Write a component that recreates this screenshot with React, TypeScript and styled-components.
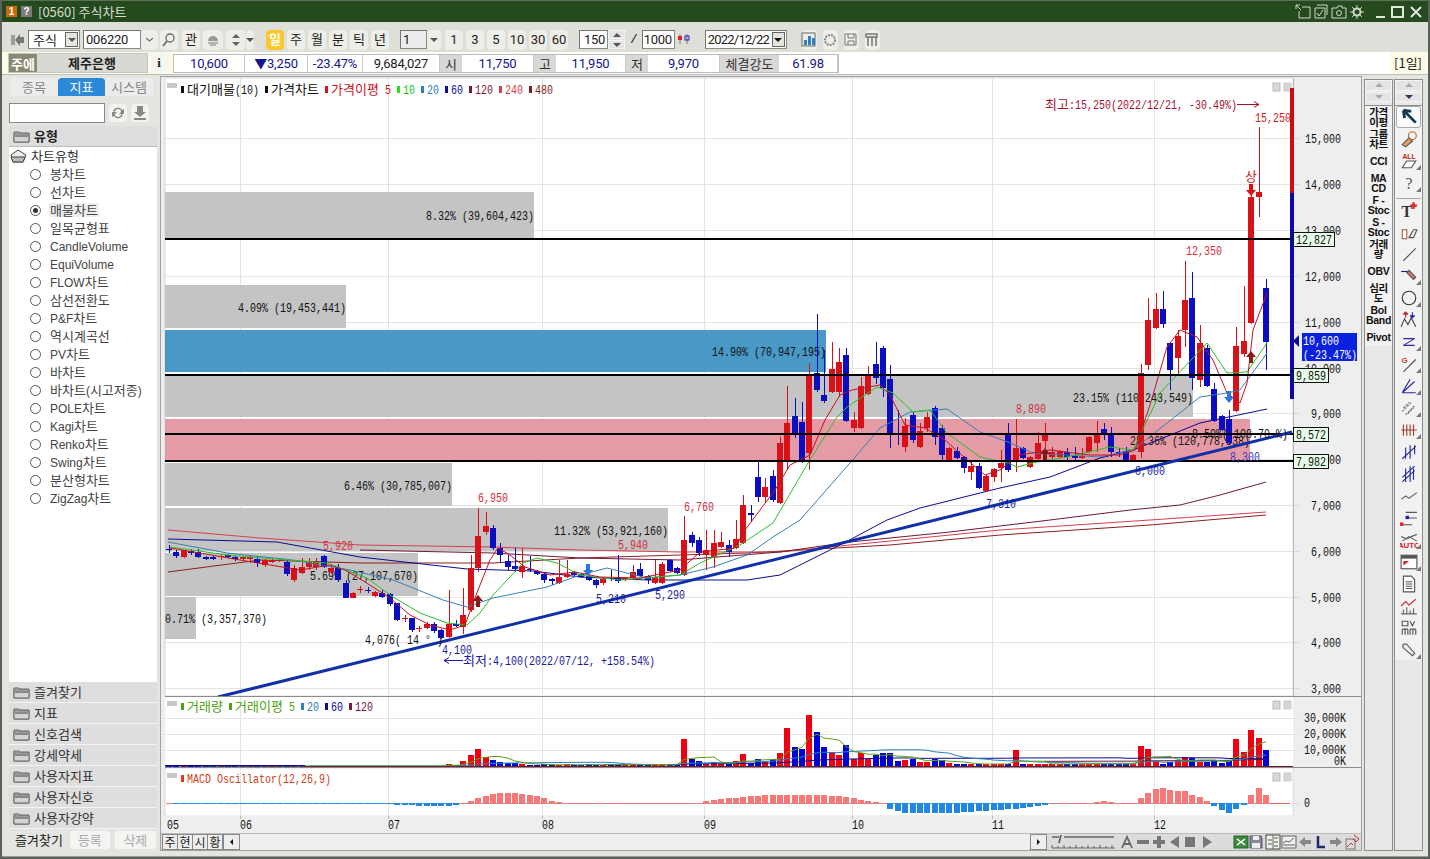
import React from 'react';
import styled, { createGlobalStyle } from 'styled-components';

const Global = createGlobalStyle`
  html, body { margin: 0; padding: 0; background: #e2e2dc; }
  #root { width: 1430px; height: 859px; overflow: hidden; }
  * { box-sizing: border-box; }
`;
const NUM = `Roboto,"Noto Sans CJK KR",sans-serif`;
const HG = `"Noto Sans CJK KR",sans-serif`;

const Win = styled.div`
  width: 1430px; height: 859px; display: flex; flex-direction: column;
  border: 2px solid #5b615a; border-top: none; background: #e4e4e0;
  font: 13px/14px ${HG}; color: #222; overflow: hidden;
`;
const TitleBar = styled.div`
  height: 22px; flex: none; background: #254a1e; border-top: 1px solid #5d6f58; display: flex; align-items: center; padding: 0 4px 0 4px;
`;
const Badge = styled.span<{ $c: string; $ml?: number }>`
  width: 11px; height: 11px; background: ${p => p.$c}; color: #fff; font: bold 10px/11px "Liberation Sans",sans-serif; text-align: center; margin-left: ${p => p.$ml ?? 0}px;
`;
const TitleText = styled.span`
  margin-left: 6px; color: #d6dfcf; font: 13px/16px ${HG};
`;
const Grow = styled.div`flex: 1;`;
const Ico = styled.svg<{ $ml?: number }>`
  display: block; flex: none; margin-left: ${p => p.$ml ?? 0}px;
`;
const Toolbar = styled.div`
  height: 30px; flex: none; background: #dfdfd9; display: flex; align-items: center; padding: 5px 0 0 8px;
`;
const Chip = styled.button<{ $w: number; $ml?: number; $on?: boolean }>`
  width: ${p => p.$w}px; height: 20px; margin-left: ${p => p.$ml ?? 0}px; padding: 0; border: none; border-radius: 4px;
  background: ${p => (p.$on ? '#fbc92c' : '#eeeee8')}; color: ${p => (p.$on ? '#fff' : '#222')};
  font: ${p => (p.$on ? 'bold ' : '')}13px/20px ${NUM}; display: flex; align-items: center; justify-content: center; flex: none;
`;
const Field = styled.div<{ $w: number; $ml?: number; $right?: boolean; $dis?: boolean }>`
  width: ${p => p.$w}px; height: 19px; margin-left: ${p => p.$ml ?? 0}px; flex: none;
  background: ${p => (p.$dis ? '#ececec' : '#fff')}; border: 1px solid #8d8d88; border-top-color: #777; border-left-color: #777;
  display: flex; align-items: center; padding: 0 2px; font: 13px/17px ${NUM}; letter-spacing: -0.3px;
  justify-content: ${p => (p.$right ? 'flex-end' : 'flex-start')};
`;
const KrField = styled(Field)`
  font: 13px/17px ${HG}; letter-spacing: 0; padding-left: 4px;
`;
const DateField = styled(Field)`letter-spacing: -0.8px;`;
const DropBox = styled.span`
  margin-left: auto; width: 13px; height: 15px; border: 1px solid #666; background: #e6e6e0; display: flex; align-items: center; justify-content: center; margin-right: -1px; flex: none;
`;
const Tri = styled.i<{ $c?: string; $up?: boolean }>`
  display: block; width: 0; height: 0; border-left: 4px solid transparent; border-right: 4px solid transparent;
  ${p => (p.$up ? `border-bottom: 4px solid ${p.$c ?? '#555'};` : `border-top: 4px solid ${p.$c ?? '#555'};`)}
`;
const Slash = styled.span`margin: 0 4px 0 5px; font: 13px/16px "Liberation Mono",monospace;`;
const InfoRow = styled.div`
  height: 23px; flex: none; display: flex; align-items: stretch; background: linear-gradient(90deg, #fdfbe5 0 171px, #fff 171px 1388px, #fdfbe5 1388px);
  padding: 1px 0 1px 6px; border-bottom: 1px solid #bdbdb8;
`;
const NameBox = styled.div`
  width: 140px; background: #d9d9d3; border: 1px solid #c6c6c0; display: flex; align-items: center; position: relative; font: bold 13px/14px ${HG};
`;
const NameTag = styled.span`
  width: 28px; height: 100%; background: #8a8a72; color: #fff; text-align: center; font: bold 13px/20px ${HG};
`;
const NameText = styled.span`flex: 1; text-align: center;`;
const InfoBtn = styled.span`
  width: 18px; margin-left: 2px; background: #f6f6f0; border-radius: 4px; text-align: center; font: bold 13px/20px "Liberation Serif",serif;
`;
const Cells = styled.div`
  display: flex; margin-left: 5px; margin-top: 1px; height: 19px; border: 1px solid #bbb; background: #fff;
`;
const Cell = styled.div<{ $w: number; $c?: string }>`
  width: ${p => p.$w}px; color: ${p => p.$c ?? '#14148c'}; text-align: center; border-right: 1px solid #c8c8c8; font: 13px/18px ${NUM}; letter-spacing: -0.2px;
`;
const HeadCell = styled.div<{ $w: number }>`
  width: ${p => p.$w}px; background: #d8d8d6; text-align: center; color: #333; font: 13px/18px ${HG};
`;
const Period = styled.span`
  margin-left: auto; margin-right: 6px; font: 13px/20px ${HG};
`;
const Body = styled.div`
  flex: 1; display: flex; padding: 1px 0 5px 6px; min-height: 0; border-bottom: 1px solid #9a9a9a;
`;
const Side = styled.div`
  width: 150px; flex: none; margin-top: 2px; margin-right: 2px; display: flex; flex-direction: column; padding-left: 1px;
`;
const Tabs = styled.div`display: flex; height: 18px; padding-left: 1px; flex: none;`;
const Tab = styled.div<{ $on?: boolean; $w: number }>`
  width: ${p => p.$w}px; text-align: center; font: 13px/18px ${HG}; background: ${p => (p.$on ? '#2b8ad8' : '#ececec')}; color: ${p => (p.$on ? '#fff' : '#888')};
  border-radius: 4px 4px 0 0;
`;
const SearchRow = styled.div`display: flex; align-items: center; margin-top: 7px; height: 20px; flex: none;`;
const SearchInput = styled.div`width: 96px; height: 20px; background: #fff; border: 1px solid #888;`;
const SmallBtn = styled.div<{ $ml: number }>`
  width: 18px; height: 18px; margin-left: ${p => p.$ml}px; background: #f3f3f0; border-radius: 4px; display: flex; align-items: center; justify-content: center;
`;
const SideHead = styled.div`
  margin-top: 3px; height: 21px; flex: none; background: #dedede; display: flex; align-items: center; padding-left: 4px; font: bold 13px/14px ${HG}; width: 148px; border-bottom: 1px solid #bbb;
`;
const Tree = styled.div`
  height: 535px; flex: none; background: #fff; width: 148px; display: flex; flex-direction: column;
`;
const TreeRoot = styled.div`
  height: 18px; flex: none; display: flex; align-items: center; padding-left: 1px; font: 13px/14px ${HG}; color: #333;
`;
const TreeItem = styled.div`
  height: 18px; flex: none; display: flex; align-items: center; padding-left: 21px; font: 13px/14px ${HG}; color: #444;
`;
const Lat = styled.span`font: 12px/14px "Liberation Sans",sans-serif;`;
const Radio = styled.i<{ $on?: boolean }>`
  width: 11px; height: 11px; flex: none; border-radius: 50%; border: 1px solid #555; background: #fff; margin-right: 8px; display: flex; align-items: center; justify-content: center;
  &::after { content: ''; width: 5px; height: 5px; border-radius: 50%; background: ${p => (p.$on ? '#333' : 'transparent')}; }
`;
const ItemLabel = styled.span<{ $on?: boolean }>`
  padding: 0 1px; background: ${p => (p.$on ? '#eee' : 'transparent')};
`;
const Section = styled.div`
  height: 21px; flex: none; width: 148px; background: #dedede; border-bottom: 1px solid #f4f4f4; display: flex; align-items: center; padding-left: 4px; font: 13px/14px ${HG}; color: #333;
`;
const SideFoot = styled.div`display: flex; align-items: center; height: 21px; width: 148px; flex: none;`;
const FootLabel = styled.span`margin-left: 6px; font: 13px/14px ${HG}; white-space: nowrap;`;
const FootBtn = styled.span<{ $ml: number; $w: number }>`
  margin-left: ${p => p.$ml}px; width: ${p => p.$w}px; height: 18px; flex: none; background: #f4f4f2; border-radius: 3px; text-align: center; color: #aaa; font: 13px/18px ${HG};
`;
const Frame = styled.div`
  width: 1202px; flex: none; border: 1px solid #a2a2a2; background: #eee; display: flex; flex-direction: column; position: relative;
`;
const Plot = styled.svg`display: block; flex: none;`;
const BottomBar = styled.div`
  height: 17px; flex: none; display: flex; align-items: center; background: #dcdcdc; padding-left: 1px; border-top: 1px solid #bbb;
`;
const BarTab = styled.span`
  width: 16px; height: 16px; background: #eee; border: 1px solid #888; text-align: center; font: 12px/14px ${HG}; margin-right: -1px;
`;
const ScrollBtn = styled.span<{ $ml?: number }>`
  width: 17px; height: 16px; margin-left: ${p => p.$ml ?? 0}px; background: #eee; border: 1px solid #888; display: flex; align-items: center; justify-content: center; flex: none;
`;
const Track = styled.div`
  flex: none; width: 790px; height: 16px; background: repeating-conic-gradient(#e8e8e8 0 25%, #f4f4f4 0 50%) 0 0 / 2px 2px;
`;
const SmallTriL = styled.i`
  border-top: 3px solid transparent; border-bottom: 3px solid transparent; border-right: 3px solid #111;
`;
const SmallTriR = styled.i`
  border-top: 3px solid transparent; border-bottom: 3px solid transparent; border-left: 3px solid #111;
`;
const Col = styled.div<{ $w: number; $ml: number }>`
  width: ${p => p.$w}px; margin-left: ${p => p.$ml}px; margin-top: 3px; flex: none; border: 1px solid #8c8c8c; background: #e8e8e8; display: flex; flex-direction: column;
`;
const SpinWrap = styled.div`height: 22px; display: flex; flex-direction: column; gap: 1px; flex: none;`;
const FieldSpin = styled(SpinWrap)`width: 17px; height: 19px;`;
const SpinCell = styled.div`
  flex: 1; background: #e2e4e6; display: flex; align-items: center; justify-content: center; border: 1px solid #f4f4f4;
`;
const ColBody = styled.div<{ $h: number }>`
  margin-top: 3px; border-top: 1px solid #8c8c8c; background: #f2f2f2; height: ${p => p.$h}px; display: flex; flex-direction: column; flex: none;
`;
const StudyItem = styled.div`
  height: 22px; flex: none; display: flex; align-items: center; justify-content: center; text-align: center; font: bold 10.5px/10px "Liberation Sans","Noto Sans CJK KR",sans-serif; color: #111; letter-spacing: -0.3px; white-space: nowrap;
`;
const Tool = styled.div<{ $on?: boolean; $corner?: boolean }>`
  height: 22px; width: 25px; margin: 0 auto; flex: none; display: flex; align-items: center; justify-content: center; position: relative;
  ${p => (p.$on ? 'background:#fafafa; border:1px solid #aaa; border-radius:3px;' : '')}
  ${p => (p.$corner ? `&::after{content:'';position:absolute;right:0;bottom:2px;border-left:5px solid transparent;border-bottom:5px solid #777;}` : '')}
`;
const Sep = styled.div`height: 1px; background: #aaa; margin: 4px 1px 0; flex: none;`;
const AsciiT = styled.text`font: 13.5px "Liberation Mono",monospace; white-space: pre;`;
const HangulT = styled.text`font: 13px "Noto Sans CJK KR",sans-serif; white-space: pre;`;

/* ---------- chart data ---------- */
type C = [number, number, number, number, 'r' | 'b'];
const candles: C[] = [
[549,550,545,553,'b'],[552,556,550,558,'b'],[550,557,550,558,'r'],[551,553,549,555,'b'],[552,557,549,558,'b'],[557,559,556,560,'b'],[557,559,556,560,'b'],[556,557,554,560,'r'],[555,557,554,558,'b'],[557,559,556,561,'b'],
[557,559,556,560,'r'],[557,559,555,563,'r'],[559,563,556,567,'b'],[560,565,559,567,'r'],[560,562,559,563,'r'],[560,561,559,562,'r'],[562,574,560,576,'b'],[568,580,565,582,'r'],[567,573,558,574,'r'],[561,567,558,570,'r'],
[561,567,558,570,'r'],[556,567,555,568,'b'],[568,572,565,574,'r'],[568,580,564,582,'b'],[583,598,580,598,'b'],[593,598,592,598,'r'],[589,590,586,593,'r'],[590,591,587,593,'b'],[592,596,591,597,'r'],[593,597,590,598,'b'],
[594,604,593,606,'b'],[603,620,603,621,'b'],[618,619,615,622,'r'],[618,630,618,632,'b'],[628,629,626,632,'r'],[624,628,622,629,'r'],[624,631,622,633,'b'],[630,638,629,639,'b'],[624,637,590,638,'r'],[624,626,620,627,'b'],
[615,627,588,634,'r'],[568,610,555,612,'r'],[536,568,508,572,'r'],[526,532,512,535,'r'],[528,548,525,550,'b'],[548,555,543,563,'b'],[561,567,555,570,'b'],[566,569,548,572,'b'],[566,572,548,578,'r'],[569,570,556,572,'b'],
[571,574,570,575,'b'],[574,580,573,583,'b'],[579,581,578,585,'b'],[577,583,560,584,'r'],[574,577,560,578,'r'],[572,575,571,576,'b'],[574,577,573,578,'b'],[576,580,575,581,'b'],[580,585,579,588,'b'],[579,583,578,585,'r'],
[578,579,570,581,'b'],[578,581,555,583,'b'],[578,580,577,581,'r'],[572,578,565,579,'r'],[569,576,563,577,'b'],[576,580,575,584,'b'],[577,583,560,584,'r'],[564,583,562,584,'r'],[560,571,559,572,'b'],[568,573,567,574,'b'],
[540,575,516,576,'r'],[535,543,532,547,'b'],[540,553,537,556,'b'],[550,555,530,570,'r'],[543,557,530,568,'r'],[542,547,532,548,'r'],[545,552,540,557,'b'],[539,548,520,549,'r'],[505,543,495,544,'r'],[513,515,505,522,'b'],
[477,497,462,502,'b'],[487,497,478,503,'r'],[476,500,470,502,'b'],[443,503,437,504,'r'],[423,462,386,470,'r'],[416,435,398,438,'b'],[422,462,402,463,'b'],[375,453,363,470,'r'],[373,390,314,392,'b'],[395,401,350,403,'b'],
[369,392,342,393,'r'],[362,392,348,397,'r'],[355,421,348,422,'b'],[420,428,412,432,'r'],[386,428,377,429,'r'],[375,394,366,395,'r'],[364,378,342,384,'b'],[348,388,346,397,'b'],[379,435,365,448,'b'],[433,435,410,445,'b'],
[426,447,418,452,'r'],[415,440,412,443,'b'],[431,447,423,448,'r'],[417,428,412,432,'r'],[408,437,406,445,'b'],[428,455,425,462,'b'],[448,460,447,461,'r'],[451,458,447,459,'b'],[457,468,456,473,'b'],[466,472,460,480,'r'],
[466,488,463,489,'b'],[476,491,475,492,'r'],[469,477,468,482,'r'],[463,468,450,482,'r'],[433,470,423,472,'b'],[448,461,419,472,'r'],[448,458,447,459,'b'],[457,467,456,468,'r'],[443,459,432,461,'r'],[435,441,423,458,'r'],
[452,457,447,459,'r'],[451,457,450,458,'r'],[452,457,448,462,'b'],[456,458,447,460,'b'],[456,458,448,459,'r'],[437,452,436,453,'r'],[435,443,421,452,'r'],[429,435,423,440,'b'],[433,452,427,457,'b'],[452,453,448,457,'b'],
[451,461,447,462,'b'],[455,461,454,462,'r'],[373,452,364,458,'r'],[320,365,298,370,'r'],[309,328,293,329,'r'],[309,324,291,328,'b'],[343,370,342,390,'b'],[336,358,330,375,'r'],[300,330,261,347,'r'],[298,378,272,390,'b'],
[343,380,325,387,'r'],[348,386,345,387,'b'],[389,421,383,422,'b'],[416,430,415,431,'b'],[419,443,410,444,'b'],[346,411,327,412,'r'],[341,354,286,357,'r'],[197,323,190,324,'r'],[192,197,127,217,'r'],[288,342,279,370,'b'],
];
const cx = (i: number) => Math.round(169 + 7.362 * i);
type Pt = [number, number];
const ma5: Pt[] = [[170,548],[240,560],[300,570],[330,565],[345,570],[365,582],[390,598],[410,615],[430,625],[450,630],[465,625],[478,590],[490,560],[498,548],[510,555],[525,567],[550,575],[575,572],[600,577],[640,578],[680,570],[700,552],[735,548],[745,530],[760,510],[775,490],[790,465],[810,455],[825,420],[840,395],[852,390],[880,385],[890,395],[905,425],[925,428],[945,440],[965,458],[985,475],[1000,470],[1020,455],[1050,450],[1090,455],[1120,455],[1135,450],[1150,405],[1167,347],[1180,330],[1197,337],[1213,360],[1227,393],[1240,403],[1247,383],[1253,330],[1267,293]];
const ma10: Pt[] = [[170,547],[227,555],[287,560],[327,563],[367,578],[393,597],[420,613],[447,623],[467,625],[480,613],[493,595],[523,563],[537,558],[557,563],[580,575],[620,580],[680,575],[700,563],[740,545],[773,523],[808,463],[837,417],[847,407],[877,387],[893,393],[913,412],[930,410],[947,433],[980,457],[1008,463],[1017,467],[1037,462],[1067,457],[1110,447],[1133,450],[1160,393],[1207,343],[1227,373],[1247,372],[1267,343]];
const ma20: Pt[] = [[168,542],[227,553],[293,560],[350,570],[393,580],[443,600],[467,607],[493,598],[547,587],[580,575],[607,568],[647,578],[680,575],[713,567],[747,555],[773,537],[800,520],[850,463],[880,428],[910,412],[947,409],[980,432],[1008,442],[1033,453],[1100,457],[1133,450],[1167,423],[1200,397],[1227,393],[1240,390],[1267,353]];
const ma60: Pt[] = [[168,539],[277,542],[360,557],[467,569],[533,571],[580,577],[647,580],[747,580],[780,575],[840,545],[887,520],[920,508],[1000,488],[1050,477],[1100,458],[1133,450],[1200,423],[1267,409]];
const ma120: Pt[] = [[360,550],[493,553],[580,558],[680,560],[780,552],[850,542],[950,532],[1050,520],[1130,510],[1180,505],[1220,495],[1266,482]];
const ma240: Pt[] = [[168,530],[260,538],[360,545],[493,547],[580,550],[680,552],[780,552],[890,541],[1000,530],[1150,520],[1266,512]];
const ma480: Pt[] = [[168,572],[260,560],[360,563],[493,563],[580,558],[747,553],[890,545],[1000,535],[1150,525],[1266,515]];
const pts = (a: Pt[]) => a.map(p => p.join(',')).join(' ');

const volMap: Record<number, number> = {38:3,39:2,40:6,41:12,42:18,43:10,44:7,45:5,46:4,47:4,70:28,71:8,72:6,73:3,74:5,75:3,76:3,77:6,78:13,79:4,80:8,81:5,82:8,83:14,84:39,85:20,86:18,87:52,88:35,89:20,90:15,91:12,92:22,93:8,94:14,95:8,96:12,97:14,98:14,99:6,100:7,101:8,102:5,103:5,104:8,105:7,106:4,115:17,132:21,133:18,134:6,135:3,136:5,137:6,138:10,139:9,140:5,141:5,142:6,143:4,144:6,145:28,146:15,147:37,148:29,149:17};
const vol = candles.map((_, i) => volMap[i] ?? (i < 38 ? 1 : i < 70 ? 2 + (i % 3 === 0 ? 1 : 0) : 3));
const sma = (n: number): Pt[] => vol.map((_, i) => {
  const s = vol.slice(Math.max(0, i - n + 1), i + 1);
  return [cx(i), 767 - s.reduce((a, b) => a + b, 0) / s.length] as Pt;
}).filter((_, i) => i >= n - 1);

const keys: Pt[] = [[0,0],[29,-0.5],[31,-2],[37,-3],[39,-2],[40,0],[41,3],[43,8],[45,11],[47,11],[49,9],[51,6],[52,3],[54,1],[72,1],[74,4],[78,7],[82,9],[88,9],[92,7],[95,3],[97,0],[98,-6],[100,-10],[106,-10],[110,-8],[114,-6],[115,-6],[116,-5],[117,-4],[118,-3],[119,-2],[120,1],[124,1],[125,1],[126,2],[127,3],[128,2],[129,1],[131,0]];
const tail = [6,11,15,16,14,13,13,9,7,3,-3,-7,-10,-6,-2,9,16,9];
const macd = candles.map((_, i) => {
  if (i >= 132) return tail[i - 132];
  for (let k = 0; k < keys.length - 1; k++) {
    const [a, va] = keys[k]; const [b, vb] = keys[k + 1];
    if (i >= a && i <= b) return va + ((vb - va) * (i - a)) / (b - a);
  }
  return 0;
});

const Lbl = ({ x, y, t, c = '#111', right }: { x: number; y: number; t: string; c?: string; right?: boolean }) => {
  const runs = t.match(/[\uAC00-\uD7A3]+|[^\uAC00-\uD7A3]+/g) ?? [];
  const width = (r: string) => (/[\uAC00-\uD7A3]/.test(r) ? r.length * 12 : r.length * 6);
  const total = runs.reduce((a, r) => a + width(r), 0);
  let at = right ? x - total : x;
  return <>{runs.map((r, i) => {
    const w = width(r); const px = at; at += w;
    return /[\uAC00-\uD7A3]/.test(r)
      ? <HangulT key={i} x={px} y={y + 5} fill={c}>{r}</HangulT>
      : <AsciiT key={i} x={px} y={y + 4.5} fill={c} textLength={w} lengthAdjust="spacingAndGlyphs">{r}</AsciiT>;
  })}</>;
};
const Mix = ({ t }: { t: string }) => {
  const runs = t.match(/[\uAC00-\uD7A3]+|[^\uAC00-\uD7A3]+/g) ?? [];
  return <>{runs.map((r, i) => (/[\uAC00-\uD7A3]/.test(r) ? <span key={i}>{r}</span> : <Lat key={i}>{r}</Lat>))}</>;
};
const Mark = ({ x, y, c }: { x: number; y: number; c: string }) => <rect x={x} y={y - 3} width={3} height={7} fill={c} />;
const MiniBoxes = ({ y }: { y: number }) => (
  <g>
    <rect x={167} y={y - 1} width={10} height={5} fill="#c8c8c8" />
    <rect x={1273} y={y - 1} width={7} height={8} fill="#d8d8d8" stroke="#bbb" />
    <rect x={1284} y={y - 1} width={7} height={8} fill="#d4d4d4" stroke="#ccc" />
  </g>
);
const vLines = [240, 388, 542, 704, 852, 992, 1154];
const Arrow = ({ x, y, c, up }: { x: number; y: number; c: string; up?: boolean }) => (
  up
    ? <polygon points={`${x},${y} ${x + 5},${y + 6} ${x + 2},${y + 6} ${x + 2},${y + 12} ${x - 2},${y + 12} ${x - 2},${y + 6} ${x - 5},${y + 6}`} fill={c} />
    : <polygon points={`${x},${y + 12} ${x + 5},${y + 6} ${x + 2},${y + 6} ${x + 2},${y} ${x - 2},${y} ${x - 2},${y + 6} ${x - 5},${y + 6}`} fill={c} />
);
const Tag = ({ x, y, w, t }: { x: number; y: number; w: number; t: string }) => (
  <g>
    <rect x={x + 0.5} y={y + 0.5} width={w} height={14} fill="#e6fce6" stroke="#111" />
    <Lbl x={x + 3} y={y + 7} t={t} />
  </g>
);

const grids = [138, 184, 230, 276, 322, 368, 413, 459, 505, 551, 597, 642, 688];
const axis: [number, string][] = [[138,'15,000'],[184,'14,000'],[230,'13,000'],[276,'12,000'],[322,'11,000'],[368,'10,000'],[413,'9,000'],[459,'8,000'],[505,'7,000'],[551,'6,000'],[597,'5,000'],[642,'4,000'],[688,'3,000']];
const profile: [number, number, number, string, string][] = [
  [192,238,534,'#c4c4c4','8.32% (39,604,423)'],
  [285,328,346,'#c4c4c4','4.09% (19,453,441)'],
  [330,372,826,'#4a98c6','14.90% (70,947,195)'],
  [376,417,1193,'#c4c4c4','23.15% (110,243,549)'],
  [419,461,1250,'#e49ba6','25.36% (120,778,538)'],
  [463,506,452,'#c4c4c4','6.46% (30,785,007)'],
  [508,551,668,'#c4c4c4','11.32% (53,921,160)'],
  [553,596,418,'#c4c4c4','5.69% (27,107,670)'],
  [597,639,196,'#c4c4c4',''],
];
const RED = '#d81018'; const NAVY = '#0a0ec0';

const MainPlot = () => (
  <Plot width={1200} height={619} viewBox="161 77 1200 619">
    <rect x={161} y={77} width={1200} height={619} fill="#eee" />
    <rect x={165} y={78} width={1128} height={618} fill="#fff" stroke="#bbb" strokeWidth={0.5} />
    {grids.map(y => <line key={y} x1={165} x2={1299} y1={y + 0.5} y2={y + 0.5} stroke="#e4e4e4" />)}
    {vLines.map(x => <line key={x} x1={x + 0.5} x2={x + 0.5} y1={78} y2={696} stroke="#e4e4e4" />)}
    {profile.map(([a, b, r, c]) => <rect key={a} x={165} y={a} width={r - 165} height={b - a} fill={c} />)}
    {profile.map(([a, b, r, , t]) => <Lbl key={a} x={r} y={(a + b) / 2 + 0.5} t={t} right />)}
    <Lbl x={165} y={618} t="0.71% (3,357,370)" />
    <polyline points={pts(ma480)} fill="none" stroke="#8c2020" />
    <polyline points={pts(ma240)} fill="none" stroke="#d84050" />
    <polyline points={pts(ma120)} fill="none" stroke="#701838" />
    <polyline points={pts(ma60)} fill="none" stroke="#0c0c90" />
    <g shapeRendering="crispEdges">
      {candles.map(([t, b, wt, wb, c], i) => {
        const col = c === 'r' ? RED : NAVY; const x = cx(i);
        return <g key={i}>
          <rect x={x} y={wt} width={1} height={wb - wt} fill={col} />
          <rect x={x - 3} y={t} width={6} height={Math.max(b - t, 1)} fill={col} />
        </g>;
      })}
    </g>
    <polyline points={pts(ma20)} fill="none" stroke="#3a80b4" />
    <polyline points={pts(ma10)} fill="none" stroke="#2cc028" />
    <polyline points={pts(ma5)} fill="none" stroke="#c81020" />
    {[239, 375, 434, 461].map(y => <rect key={y} x={165} y={y - 1} width={1128} height={2} fill="#000" />)}
    <line x1={218} y1={697} x2={1292} y2={432} stroke="#1030a8" strokeWidth={3} />
    <Arrow x={478} y={595} c="#8a1818" up />
    <Arrow x={588} y={564} c="#2a78dc" />
    <Arrow x={1045} y={448} c="#8a1818" up />
    <Arrow x={1229} y={391} c="#2a78dc" />
    <Arrow x={1251} y={351} c="#8a1818" up />
    <Arrow x={1251} y={184} c="#e01010" />
    <Lbl x={1245} y={176} t="상" c="#d02020" />
    <Lbl x={1255} y={117} t="15,250" c="#d02020" />
    <Lbl x={1186} y={250} t="12,350" c="#d03040" />
    <Lbl x={1016} y={408} t="8,890" c="#d03040" />
    <Lbl x={478} y={497} t="6,950" c="#d03040" />
    <Lbl x={684} y={506} t="6,760" c="#d03040" />
    <Lbl x={618} y={544} t="5,940" c="#d03040" />
    <Lbl x={323} y={545} t="5,920" c="#d03040" />
    <Lbl x={655} y={594} t="5,290" c="#1a1a9c" />
    <Lbl x={596} y={598} t="5,210" c="#1a1a9c" />
    <Lbl x={986} y={503} t="7,310" c="#1a1a9c" />
    <Lbl x={1135} y={470} t="8,000" c="#1a1a9c" />
    <Lbl x={1230} y={456} t="8,300" c="#3a3ac0" />
    <Lbl x={442} y={649} t="4,100" c="#1a1a9c" />
    <Lbl x={365} y={639} t="4,076( 14 ° )" />
    <Lbl x={1192} y={433} t="8.50%( 108.70 %)" />
    <Lbl x={1045} y={104} t="최고:15,250(2022/12/21, -30.49%)" c="#a81030" />
    <path d="M1237 104.5H1259M1254 101.5L1259 104.5L1254 107.5" fill="none" stroke="#a81030" />
    <path d="M463 660.500H444M449 657.500L444 660.500L449 663.500" fill="none" stroke="#1a1a9c" />
    <Lbl x={463} y={660} t="최저:4,100(2022/07/12, +158.54%)" c="#1a1a9c" />
    <MiniBoxes y={84} />
    <Mark x={181} y={89} c="#111" /><Lbl x={187} y={89} t="대기매물(10)" />
    <Mark x={265} y={89} c="#111" /><Lbl x={271} y={89} t="가격차트" />
    <Mark x={325} y={89} c="#e01020" /><Lbl x={331} y={89} t="가격이평" c="#d01020" /><Lbl x={385} y={89} t="5" c="#d01020" />
    <Mark x={397} y={89} c="#20e020" /><Lbl x={403} y={89} t="10" c="#18c818" />
    <Mark x={421} y={89} c="#2a80c0" /><Lbl x={427} y={89} t="20" c="#2a80c0" />
    <Mark x={445} y={89} c="#0c0c98" /><Lbl x={451} y={89} t="60" c="#0c0c98" />
    <Mark x={469} y={89} c="#781840" /><Lbl x={475} y={89} t="120" c="#781840" />
    <Mark x={499} y={89} c="#d84050" /><Lbl x={505} y={89} t="240" c="#d84050" />
    <Mark x={529} y={89} c="#802020" /><Lbl x={535} y={89} t="480" c="#802020" />
    <rect x={1293} y={78} width={68} height={618} fill="#eee" />
    {grids.map(y => <line key={y} x1={1293} x2={1300} y1={y + 0.5} y2={y + 0.5} stroke="#ddd" />)}
    {axis.map(([y, t]) => <Lbl key={y} x={1341} y={y} t={t} right />)}
    <line x1={1293.5} x2={1293.5} y1={78} y2={696} stroke="#b8b8b8" />
    <rect x={1290} y={88} width={4} height={105} fill="#cc0c10" />
    <rect x={1290} y={193} width={4} height={206} fill="#0a0aa8" />
    <Tag x={1293} y={232} w={41} t="12,827" />
    <Tag x={1293} y={368} w={35} t="9,859" />
    <Tag x={1293} y={427} w={35} t="8,572" />
    <Tag x={1293} y={454} w={35} t="7,982" />
    <polygon points="1293,341 1299,335 1299,347" fill="#0a0aa8" />
    <rect x={1302} y={333} width={55} height={28} fill="#0a22e0" />
    <Lbl x={1303} y={340} t="10,600" c="#fff" />
    <Lbl x={1303} y={354} t="(-23.47%)" c="#fff" />
  </Plot>
);

const VolPlot = () => (
  <Plot width={1200} height={71} viewBox="161 696 1200 71">
    <rect x={161} y={696} width={1200} height={71} fill="#eee" />
    <rect x={165} y={697} width={1128} height={70} fill="#fff" />
    {[718, 734, 750].map(y => <line key={y} x1={165} x2={1300} y1={y + 0.5} y2={y + 0.5} stroke="#e4e4e4" />)}
    {vLines.map(x => <line key={x} x1={x + 0.5} x2={x + 0.5} y1={697} y2={767} stroke="#e4e4e4" />)}
    <g shapeRendering="crispEdges">
      {vol.map((h, i) => <rect key={i} x={cx(i) - 3} y={767 - h} width={6} height={h} fill={candles[i][4] === 'r' ? '#f00010' : '#0000d8'} />)}
    </g>
    <polyline points={pts(sma(120))} fill="none" stroke="#701838" />
    <polyline points={pts(sma(60))} fill="none" stroke="#0c0c90" />
    <polyline points={pts(sma(20))} fill="none" stroke="#2a80c0" />
    <polyline points={pts(sma(5))} fill="none" stroke="#60a010" />
    <rect x={165} y={765} width={140} height={1.5} fill="#0c0c90" />
    <rect x={305} y={766} width={988} height={1} fill="#701838" />
    <line x1={165} x2={1361} y1={696.5} y2={696.5} stroke="#8c8c8c" />
    <MiniBoxes y={702} />
    <Mark x={181} y={706} c="#50a010" /><Lbl x={187} y={706} t="거래량" c="#50a010" />
    <Mark x={229} y={706} c="#50a010" /><Lbl x={235} y={706} t="거래이평" c="#50a010" /><Lbl x={289} y={706} t="5" c="#50a010" />
    <Mark x={301} y={706} c="#2a80c0" /><Lbl x={307} y={706} t="20" c="#2a80c0" />
    <Mark x={325} y={706} c="#0c0c98" /><Lbl x={331} y={706} t="60" c="#0c0c98" />
    <Mark x={349} y={706} c="#781840" /><Lbl x={355} y={706} t="120" c="#781840" />
    <Lbl x={1346} y={717} t="30,000K" right />
    <Lbl x={1346} y={733} t="20,000K" right />
    <Lbl x={1346} y={749} t="10,000K" right />
    <Lbl x={1346} y={760} t="0K" right />
  </Plot>
);

const MacdPlot = () => (
  <Plot width={1200} height={49} viewBox="161 767 1200 49">
    <rect x={161} y={767} width={1200} height={49} fill="#eee" />
    <rect x={165} y={768} width={1128} height={48} fill="#fff" stroke="#c4c4c4" strokeWidth={0.5} />
    {vLines.map(x => <line key={x} x1={x + 0.5} x2={x + 0.5} y1={768} y2={816} stroke="#e4e4e4" />)}
    <line x1={1293} x2={1300} y1={803.5} y2={803.5} stroke="#ddd" />
    <line x1={167} x2={1290} y1={803.5} y2={803.5} stroke="#70a0c0" />
    <line x1={1270} x2={1290} y1={803.5} y2={803.5} stroke="#e06050" />
    <g shapeRendering="crispEdges">
      {macd.map((v, i) => {
        const h = Math.max(Math.round(Math.abs(v)), 1);
        return <rect key={i} x={cx(i) - 3} y={v >= 0 ? 804 - h : 803} width={6} height={h} fill={v >= 0 ? '#f87878' : '#2088e0'} />;
      })}
    </g>
    <line x1={165} x2={1361} y1={767.5} y2={767.5} stroke="#8c8c8c" />
    <MiniBoxes y={774} />
    <Mark x={181} y={778} c="#e03818" /><Lbl x={187} y={778} t="MACD Oscillator(12,26,9)" c="#d04020" />
    <Lbl x={1304} y={802} t="0" />
  </Plot>
);

const TimePlot = () => (
  <Plot width={1200} height={17} viewBox="161 816 1200 17">
    <rect x={161} y={816} width={1200} height={17} fill="#eee" />
    {[[167,'05'],[240,'06'],[388,'07'],[542,'08'],[704,'09'],[852,'10'],[992,'11'],[1154,'12']].map(([x, t]) => (
      <Lbl key={t as string} x={x as number} y={824} t={t as string} />
    ))}
    {vLines.map(x => <line key={x} x1={x + 0.5} x2={x + 0.5} y1={816} y2={819} stroke="#bbb" />)}
  </Plot>
);

const FolderIco = styled(Ico)`margin-right: 3px;`;
const Folder = ({ open }: { open?: boolean }) => (
  <FolderIco width={18} height={14} viewBox="0 0 18 14">
    {open
      ? <><path d="M1 6L8 1l8 5-3 7H3z" fill="#eee" stroke="#444" /><path d="M1 8h14l-2 5H3z" fill="#bbb" stroke="#444" /></>
      : <><path d="M1 3h5l1 1h9v9H1z" fill="#bdbdbd" stroke="#666" /><path d="M1 5h15v8H1z" fill="#d4d4d4" stroke="#666" /><rect x={2} y={6} width={13} height={2} fill="#888" /></>}
  </FolderIco>
);

const IS = (p: { children: React.ReactNode; w?: number; ml?: number; s?: number }) => (
  <Ico width={p.s ?? p.w ?? 16} height={p.s ?? 16} viewBox={`0 0 ${p.w ?? 16} 16`} $ml={p.ml ?? 0}>{p.children}</Ico>
);

const treeItems = ['봉차트','선차트','매물차트','일목균형표','CandleVolume','EquiVolume','FLOW차트','삼선전환도','P&F차트','역시계곡선','PV차트','바차트','바차트(시고저종)','POLE차트','Kagi차트','Renko차트','Swing차트','분산형차트','ZigZag차트'];
const sections = ['즐겨찾기','지표','신호검색','강세약세','사용자지표','사용자신호','사용자강약'];
const studies: React.ReactNode[] = [<>가격<br />이평</>,<>그룹<br />차트</>,'CCI',<>MA<br />CD</>,<>F -<br />Stoc</>,<>S -<br />Stoc</>,<>거래<br />량</>,'OBV',<>심리<br />도</>,<>Bol<br />Band</>,'Pivot'];

const g = '#555';
const toolsA: [React.ReactNode, boolean?, boolean?][] = [
  [<><path d="M3 2l11 11M3 2l1 7M3 2l7 1" stroke="#123a5a" strokeWidth={2.5} fill="none" /></>, true],
  [<><path d="M2 13l6-6 3 3-6 5z" fill="#e8a060" stroke={g} /><circle cx={11} cy={5} r={3.5} fill="none" stroke="#c06030" /></>],
  [<><text x={8} y={6} textAnchor="middle" fontSize={6} fontWeight={700} fill="#c02020" fontFamily="Liberation Sans">ALL</text><path d="M2 14l4-6h8l-4 6z" fill="#fff" stroke={g} /></>, false, true],
  [<text x={8} y={13} textAnchor="middle" fontSize={14} fontFamily="Liberation Serif" fill={g}>?</text>, false, true],
];
const toolsB: [React.ReactNode, boolean?][] = [
  [<><text x={6} y={14} textAnchor="middle" fontSize={14} fontWeight={700} fontFamily="Liberation Serif" fill="#333">T</text><path d="M12 1v6M9 4h6" stroke="#e02020" strokeWidth={2} /></>],
  [<><rect x={2} y={6} width={4} height={8} fill="#fff" stroke="#b06040" /><path d="M8 13l4-7h3l-3 7z" fill="#eee" stroke={g} /></>],
  [<path d="M3 14L14 3" stroke={g} fill="none" />],
  [<><path d="M1 4h8" stroke="#202090" /><path d="M6 5l6 6 2-2-6-6z" fill="#e87070" stroke={g} /></>, true],
  [<circle cx={8} cy={8} r={6} fill="none" stroke="#333" />, true],
  [<><path d="M1 14l3-7 3 5 3-6 4 8" stroke="#444" fill="none" /><path d="M5 1v5M3 3l2-2 2 2" stroke="#d02020" /><path d="M11 1v5M9 4l2 2 2-2" stroke="#2020c0" /></>],
  [<path d="M3 5h10M3 11h10M13 5L3 11" stroke="#2828a0" fill="none" />, true],
  [<><text x={4} y={7} textAnchor="middle" fontSize={7} fontWeight={700} fontFamily="Liberation Sans" fill="#d04020">G</text><path d="M3 15L14 4" stroke={g} /></>, true],
  [<path d="M2 14L13 4M2 14L9 2M2 14h12" stroke="#2828a0" fill="none" />, true],
  [<path d="M2 11L10 3M5 14L13 6M3 8l5-5M7 13l5-5" stroke="#777" fill="none" strokeDasharray="2 1" />, true],
  [<path d="M1 8h14M3 3v10M6 3v10M9 3v10M12 3v10" stroke="#a04030" fill="none" />, true],
  [<path d="M2 14L14 3M5 4v10M9 2v12M13 2v8" stroke="#2828a0" fill="none" />],
  [<path d="M2 11L13 1M2 15L13 5M5 3v12M9 1v14M12 3v10" stroke="#2828a0" fill="none" />],
  [<path d="M1 11l4-3 3 2 7-5" stroke="#666" fill="none" />],
  [<><path d="M5 3h10M5 8h10M1 14h10" stroke="#555" fill="none" /><rect x={5} y={6} width={3} height={3} fill="#2020c0" /><rect x={0} y={12} width={3} height={3} fill="#e02020" /></>],
  [<><path d="M1 5l5 2 4-2 5-2M2 9l6-4 7 4" stroke="#666" fill="none" /><text x={8} y={15} textAnchor="middle" fontSize={7} fontWeight={700} fontFamily="Liberation Sans" fill="#d02020">AUTO</text></>, true],
  [<><rect x={1} y={2} width={14} height={12} fill="#fff" stroke="#555" /><rect x={1} y={2} width={14} height={3} fill="#555" /><path d="M3 7h5L3 11z" fill="#d02020" /></>, true],
  [<><path d="M3 1h7l3 3v11H3z" fill="#fff" stroke="#555" /><path d="M5 6h6M5 8h6M5 10h6M5 12h6" stroke="#555" /></>],
  [<><path d="M1 15h14M3 15v-4M6 15v-6M9 15v-3M12 15v-5" stroke="#666" /><path d="M1 8l4-4 3 3 6-5" stroke="#c03030" fill="none" /></>],
  [<path d="M2 2h5v4H2zM9 2l2 4 2-4M2 9h5M2 9v5M7 9v5M4.500 9v5M9 9v5M9 9h5M14 9v5M11.500 9v5" stroke="#555" fill="none" />],
  [<path d="M3 3a3 3 0 0 1 4 1l6 7-2 2-7-6a3 3 0 0 1-1-4z" fill="#eee" stroke="#555" />, true],
];
const Bars = ({ c }: { c: string }) => <path d="M3 13V8h3v5M7 13V4h3v9M11 13V6h3v7" fill={c} />;

export default function App() {
  return (
    <Win>
      <Global />
      <TitleBar>
        <Badge $c="#c8690e">1</Badge>
        <Badge $c="#7b7b7b" $ml={4}>?</Badge>
        <TitleText>[0560] 주식차트</TitleText>
        <Grow />
        <IS><path d="M1 1v4M1 1h4M1 1l5 5M7 3h8v11H4V7" stroke="#cfd8c8" fill="none" /></IS>
        <IS ml={2}><path d="M4 1h10v10M2 4h10v10H2z" stroke="#cfd8c8" fill="none" /><path d="M4 9l2 3 4-6" stroke="#cfd8c8" fill="none" /></IS>
        <IS ml={2}><path d="M1 4h5l1-2h4v2h4v10H1z" stroke="#cfd8c8" fill="none" /><circle cx={8} cy={9} r={2.500} stroke="#cfd8c8" fill="none" /></IS>
        <IS ml={2}><circle cx={8} cy={8} r={3.500} stroke="#cfd8c8" strokeWidth={2} fill="none" /><path d="M8 1v3M8 12v3M1 8h3M12 8h3M3 3l2 2M11 11l2 2M13 3l-2 2M3 13l2-2" stroke="#cfd8c8" /></IS>
        <IS ml={7}><path d="M4 13h9" stroke="#dfe6da" strokeWidth={2} /></IS>
        <IS ml={2}><rect x={2} y={3} width={11} height={10} fill="none" stroke="#dfe6da" strokeWidth={2} /></IS>
        <IS ml={2}><path d="M3 3l10 10M13 3L3 13" stroke="#dfe6da" strokeWidth={2} /></IS>
      </TitleBar>

      <Toolbar>
        <IS w={17}><path d="M2 3v10M4 3v10" stroke="#888" strokeWidth={1.500} /><path d="M14 5H10V2L5 8l5 6v-3h4z" fill="#777" /></IS>
        <KrField $w={52} $ml={1}>주식<DropBox><Tri /></DropBox></KrField>
        <Field $w={58} $ml={3}>006220</Field>
        <Chip $w={17}><IS w={16} s={11}><path d="M3 6l5 4 5-4" stroke="#555" fill="none" strokeWidth={1.500} /></IS></Chip>
        <Chip $w={18} $ml={2}><IS><circle cx={9} cy={6} r={4} fill="none" stroke="#666" strokeWidth={1.300} /><path d="M6 9l-4 5" stroke="#666" strokeWidth={1.800} /></IS></Chip>
        <Chip $w={18} $ml={4}>관</Chip>
        <Chip $w={20} $ml={3}><IS><path d="M3 9a5 5 0 0 1 10 0z" fill="#999" /><path d="M3 11h10M5 13h6" stroke="#777" /></IS></Chip>
        <Chip $w={19} $ml={3}><IS><path d="M8 2l4 4H4zM8 14l4-4H4z" fill="#666" /></IS></Chip>
        <Chip $w={8} $ml={1}><Tri /></Chip>
        <Chip $w={18} $ml={12} $on>일</Chip>
        <Chip $w={18} $ml={3}>주</Chip>
        <Chip $w={18} $ml={3}>월</Chip>
        <Chip $w={18} $ml={3}>분</Chip>
        <Chip $w={18} $ml={3}>틱</Chip>
        <Chip $w={18} $ml={3}>년</Chip>
        <Field $w={27} $ml={11} $dis>1</Field>
        <Chip $w={14}><Tri /></Chip>
        {[['1',4],['3',3],['5',3],['10',3],['30',3],['60',3]].map(([t, m]) => (
          <Chip key={t as string} $w={18} $ml={m as number}>{t}</Chip>
        ))}
        <Field $w={29} $ml={11} $right>150</Field>
        <FieldSpin><SpinCell><Tri $up /></SpinCell><SpinCell><Tri /></SpinCell></FieldSpin>
        <Slash>/</Slash>
        <Field $w={33} $right>1000</Field>
        <IS w={17} ml={1}><path d="M4 2v10M11 2v10" stroke="#777" /><rect x={2} y={4} width={4} height={4} fill="#e02020" /><rect x={9} y={4} width={4} height={4} fill="none" stroke="#2020c0" /></IS>
        <DateField $w={82} $ml={12}>2022/12/22<DropBox><Tri $c="#111" /></DropBox></DateField>
        <Chip $w={15} $ml={15}><IS><rect x={1} y={1} width={13} height={13} fill="none" stroke="#666" /><Bars c="#3080c0" /></IS></Chip>
        <Chip $w={15} $ml={6}><IS><circle cx={8} cy={8} r={5} fill="none" stroke="#888" strokeWidth={2} strokeDasharray="2 1" /></IS></Chip>
        <Chip $w={15} $ml={6}><IS><path d="M2 2h11v11H2zM5 2v4h6V2M5 13V9h6v4" fill="none" stroke="#777" /></IS></Chip>
        <Chip $w={15} $ml={6}><IS><path d="M2 2h11v3H2zM4 5v9M8 5v9M12 5v9" fill="none" stroke="#777" strokeWidth={1.500} /></IS></Chip>
      </Toolbar>

      <InfoRow>
        <NameBox><NameTag>주에</NameTag><NameText>제주은행</NameText></NameBox>
        <InfoBtn>i</InfoBtn>
        <Cells>
          <Cell $w={71}>10,600</Cell>
          <Cell $w={63}>▼3,250</Cell>
          <Cell $w={55}>-23.47%</Cell>
          <Cell $w={77} $c="#222">9,684,027</Cell>
          <HeadCell $w={22}>시</HeadCell>
          <Cell $w={72}>11,750</Cell>
          <HeadCell $w={22}>고</HeadCell>
          <Cell $w={70}>11,950</Cell>
          <HeadCell $w={22}>저</HeadCell>
          <Cell $w={72}>9,970</Cell>
          <HeadCell $w={59}>체결강도</HeadCell>
          <Cell $w={59}>61.98</Cell>
        </Cells>
        <Period>[1일]</Period>
      </InfoRow>

      <Body>
        <Side>
          <Tabs>
            <Tab $w={48}>종목</Tab>
            <Tab $w={47} $on>지표</Tab>
            <Tab $w={48}>시스템</Tab>
          </Tabs>
          <SearchRow>
            <SearchInput />
            <SmallBtn $ml={4}><IS><path d="M3 6a5 5 0 0 1 9-1l2-1v5H9l2-2a3 3 0 0 0-6 0zM13 10a5 5 0 0 1-9 1l-2 1V7h5l-2 2a3 3 0 0 0 6 0z" fill="#888" /></IS></SmallBtn>
            <SmallBtn $ml={4}><IS><path d="M5 1h6v6h3l-6 5-6-5h3zM2 13h12v2H2z" fill="#888" /></IS></SmallBtn>
          </SearchRow>
          <SideHead><Folder />유형</SideHead>
          <Tree>
            <TreeRoot><Folder open />차트유형</TreeRoot>
            {treeItems.map((t, i) => (
              <TreeItem key={t}><Radio $on={i === 2} /><ItemLabel $on={i === 2}><Mix t={t} /></ItemLabel></TreeItem>
            ))}
          </Tree>
          {sections.map(s => <Section key={s}><Folder />{s}</Section>)}
          <SideFoot>
            <FootLabel>즐겨찾기</FootLabel>
            <FootBtn $ml={7} $w={40}>등록</FootBtn>
            <FootBtn $ml={5} $w={41}>삭제</FootBtn>
          </SideFoot>
        </Side>

        <Frame>
          <MainPlot />
          <VolPlot />
          <MacdPlot />
          <TimePlot />
          <BottomBar>
            <BarTab>주</BarTab><BarTab>현</BarTab><BarTab>시</BarTab><BarTab>황</BarTab>
            <ScrollBtn $ml={1}><SmallTriL /></ScrollBtn>
            <Track />
            <ScrollBtn><SmallTriR /></ScrollBtn>
            <Ico width={65} height={15} viewBox="0 0 65 15" $ml={4}>
              <path d="M1 2h7M13 2h50" stroke="#666" strokeWidth={1.500} />
              <path d="M10 0L8 8" stroke="#555" strokeWidth={1.500} />
              <path d="M1 13h63M1 10v3M7 11v2M13 10v3M19 11v2M25 10v3M31 11v2M37 10v3M43 11v2M49 10v3M55 11v2M61 10v3" stroke="#444" fill="none" strokeWidth={0.800} />
            </Ico>
            <IS ml={3}><path d="M3 14L8 3l5 11M5 10h6" stroke="#666" strokeWidth={1.800} fill="none" /></IS>
            <IS><rect x={2} y={6} width={12} height={4} fill="#777" /></IS>
            <IS><path d="M6 2h4v4h4v4h-4v4H6v-4H2V6h4z" fill="#777" /></IS>
            <IS><path d="M12 2v12L3 8z" fill="#777" /></IS>
            <IS ml={-1}><rect x={3} y={3} width={10} height={10} fill="#777" /></IS>
            <IS ml={1}><path d="M4 2v12l9-6z" fill="#777" /></IS>
            <IS ml={18}><rect x={1} y={2} width={14} height={12} fill="#3c8c3c" stroke="#286028" /><path d="M4 5l8 6M12 5l-8 6" stroke="#fff" strokeWidth={1.500} /></IS>
            <IS ml={-1}><path d="M2 2h11l1 2v10H2z" fill="#889" stroke="#556" /><rect x={5} y={2} width={6} height={4} fill="#eee" /><rect x={4} y={9} width={8} height={5} fill="#eee" /></IS>
            <IS ml={1}><rect x={1} y={1} width={14} height={14} fill="#eee" stroke="#444" /><path d="M3 6h4M3 10h4M9 4h4M9 8h4M9 12h4" stroke="#466a2a" /><path d="M8 1v14" stroke="#666" /></IS>
            <IS><rect x={1} y={2} width={14} height={12} fill="#eee" stroke="#666" /><path d="M2 9l3-2 3 1 5-4M2 11h12" stroke="#666" fill="none" /></IS>
            <IS><path d="M8 3v3h6v4H8v3L2 8z" fill="#888" /></IS>
            <IS><path d="M5 2v11h7" stroke="#1a2a6a" strokeWidth={2.500} fill="none" /></IS>
            <IS ml={-1}><path d="M8 3v3H2v4h6v3l6-5z" fill="#888" /></IS>
            <IS><rect x={2} y={5} width={9} height={10} fill="none" stroke="#777" /><path d="M3 13l4-4 2 2M10 1l5 4-3 3-3-3" stroke="#c03030" fill="none" /></IS>
          </BottomBar>
        </Frame>

        <Col $w={29} $ml={2}>
          <SpinWrap>
            <SpinCell><Tri $up $c="#aaa" /></SpinCell>
            <SpinCell><Tri $c="#aaa" /></SpinCell>
          </SpinWrap>
          <ColBody $h={241}>
            {studies.map((s, i) => <StudyItem key={i}>{s}</StudyItem>)}
          </ColBody>
        </Col>
        <Col $w={29} $ml={1}>
          <SpinWrap>
            <SpinCell><Tri $up $c="#aaa" /></SpinCell>
            <SpinCell><Tri $c="#2a3a60" /></SpinCell>
          </SpinWrap>
          <ColBody $h={555}>
            {toolsA.map(([ic, on, corner], i) => <Tool key={i} $on={on} $corner={corner}><IS s={18}>{ic}</IS></Tool>)}
            <Sep />
            {toolsB.map(([ic, corner], i) => <Tool key={i} $corner={corner}><IS s={18}>{ic}</IS></Tool>)}
          </ColBody>
        </Col>
      </Body>
    </Win>
  );
}
